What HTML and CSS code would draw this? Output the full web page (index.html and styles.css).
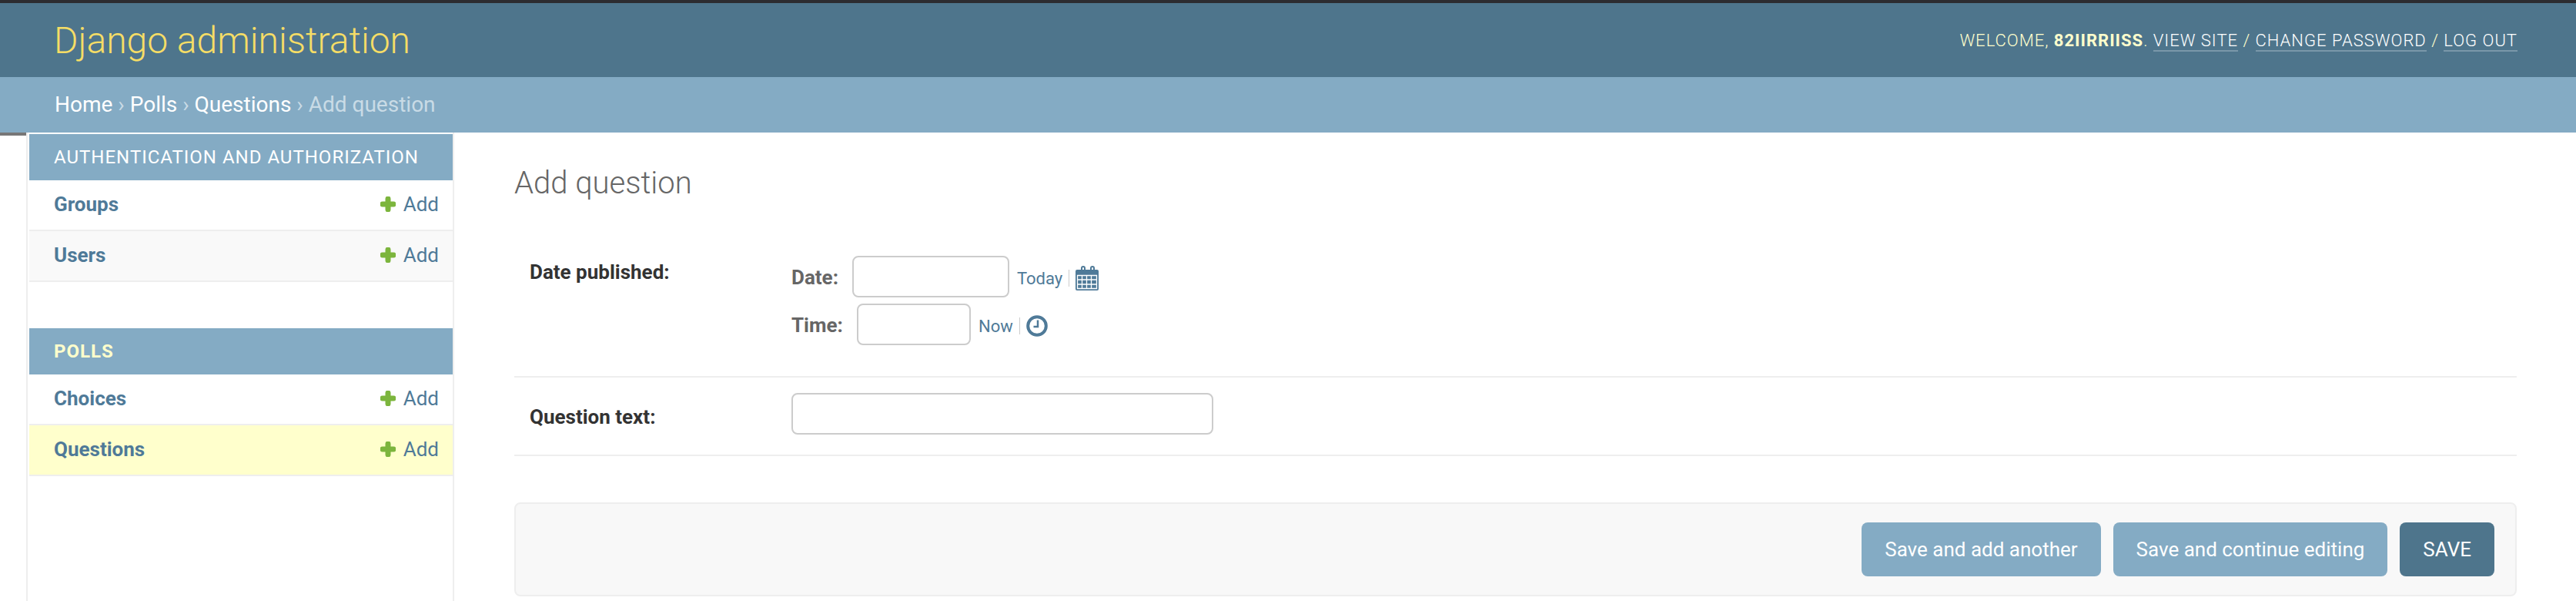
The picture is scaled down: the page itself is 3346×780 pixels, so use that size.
FILE: index.html
```html
<!DOCTYPE html>
<html lang="en">
<head>
    <meta charset="UTF-8">
    <meta name="viewport" content="width=device-width, initial-scale=1.0">
    <title>Add question | Django site admin</title>
    <link rel="stylesheet" href="styles.css">
</head>
<body>
    <header class="header">
        <div class="branding">Django administration</div>
        <div class="user-tools">
            Welcome, <strong>82iirriiss</strong>.
            <a href="#">View site</a> / <a href="#">Change password</a> / <a href="#">Log out</a>
        </div>
    </header>
    <div class="breadcrumbs">
        <a href="#">Home</a> <span class="sep">›</span> <a href="#">Polls</a> <span class="sep">›</span> <a href="#">Questions</a> <span class="sep">›</span> Add question
    </div>

    <div class="main">
        <div class="gutter"></div>
        <nav class="sidebar">
            <div class="app">
                <div class="caption">Authentication and Authorization</div>
                <div class="model">
                    <a class="model-name" href="#">Groups</a>
                    <a class="add-link" href="#">
                        <svg class="plus" viewBox="0 0 20 20"><path d="M10 3v14M3 10h14" /></svg>Add
                    </a>
                </div>
                <div class="model alt">
                    <a class="model-name" href="#">Users</a>
                    <a class="add-link" href="#">
                        <svg class="plus" viewBox="0 0 20 20"><path d="M10 3v14M3 10h14" /></svg>Add
                    </a>
                </div>
            </div>
            <div class="app">
                <div class="caption current">Polls</div>
                <div class="model">
                    <a class="model-name" href="#">Choices</a>
                    <a class="add-link" href="#">
                        <svg class="plus" viewBox="0 0 20 20"><path d="M10 3v14M3 10h14" /></svg>Add
                    </a>
                </div>
                <div class="model selected">
                    <a class="model-name" href="#">Questions</a>
                    <a class="add-link" href="#">
                        <svg class="plus" viewBox="0 0 20 20"><path d="M10 3v14M3 10h14" /></svg>Add
                    </a>
                </div>
            </div>
        </nav>

        <main class="content">
            <h1>Add question</h1>
            <form>
                <div class="form-row">
                    <label class="field-label">Date published:</label>
                    <div class="datetime">
                        <div class="dt-line">
                            <label class="dt-label date-label" for="id_date">Date:</label>
                            <input class="date-input" type="text" id="id_date">
                            <a class="shortcut" href="#">Today</a>
                            <span class="pipe"></span>
                            <a class="dt-icon" href="#">
                                <svg class="calendar" viewBox="0 0 30 32">
                                    <path class="cal-body" d="M2 5h26a2 2 0 0 1 2 2v23a2 2 0 0 1-2 2H2a2 2 0 0 1-2-2V7a2 2 0 0 1 2-2z" />
                                    <path class="cal-ring" d="M8 9V3a2 2 0 0 1 4 0v6M20 9V3a2 2 0 0 1 4 0v6" />
                                    <path class="cal-grid" d="M2.5 12.500h25v17h-25zM2.500 18h25M2.500 24h25M8.500 12.500v17M14.500 12.500v17M20.500 12.500v17" />
                                </svg>
                            </a>
                        </div>
                        <div class="dt-line">
                            <label class="dt-label time-label" for="id_time">Time:</label>
                            <input class="time-input" type="text" id="id_time">
                            <a class="shortcut" href="#">Now</a>
                            <span class="pipe"></span>
                            <a class="dt-icon" href="#">
                                <svg class="clock" viewBox="0 0 28 28">
                                    <circle cx="14" cy="14" r="11.800" />
                                    <path d="M15 6.500V15H9.500" />
                                </svg>
                            </a>
                        </div>
                    </div>
                </div>
                <div class="form-row text-row">
                    <label class="field-label" for="id_question_text">Question text:</label>
                    <input class="text-input" type="text" id="id_question_text">
                </div>
                <div class="submit-row">
                    <button class="btn" type="button">Save and add another</button>
                    <button class="btn" type="button">Save and continue editing</button>
                    <button class="btn btn-default" type="button">SAVE</button>
                </div>
            </form>
        </main>
    </div>
</body>
</html>
```

FILE: styles.css
```css
* {
    box-sizing: border-box;
}

body {
    margin: 0;
    height: 780px;
    overflow: hidden;
    background: #fff;
    color: #333;
    font-family: Roboto, "Liberation Sans", sans-serif;
    font-size: 26px;
    display: flex;
    flex-direction: column;
}

a {
    color: #4f7a98;
    text-decoration: none;
}

.header {
    height: 100px;
    flex: none;
    border-top: 4px solid #2c2c30;
    background: #4e758c;
    padding: 0 76px 0 70px;
    display: flex;
    justify-content: space-between;
    align-items: center;
}

.branding {
    color: #f5dd66;
    font-size: 48px;
    font-weight: 300;
}

.user-tools {
    color: #ffc;
    font-size: 22px;
    font-weight: 300;
    letter-spacing: 1px;
    text-transform: uppercase;
}

.user-tools strong {
    font-weight: 700;
}

.user-tools a {
    color: #fff;
    border-bottom: 2px solid rgba(255, 255, 255, 0.25);
}

.breadcrumbs {
    height: 72px;
    flex: none;
    background: #84abc4;
    color: #c9dbe6;
    padding-left: 71px;
    font-size: 28px;
    line-height: 72px;
}

.breadcrumbs a {
    color: #fff;
}

.main {
    flex: 1;
    display: flex;
    min-height: 0;
}

.gutter {
    flex: 0 0 34px;
    height: 4px;
    background: #777;
}

.sidebar {
    flex: 0 0 556px;
    border-left: 2px solid #eee;
    border-right: 2px solid #eee;
    padding: 2px 0 0 2px;
}

.app {
    margin-bottom: 60px;
}

.caption {
    height: 60px;
    background: #84abc4;
    color: #fff;
    padding-left: 32px;
    font-size: 24px;
    letter-spacing: 1px;
    text-transform: uppercase;
    display: flex;
    align-items: center;
}

.caption.current {
    color: #ffc;
    font-weight: 700;
}

.model {
    height: 66px;
    border-bottom: 2px solid #eee;
    padding: 0 18px 2px 32px;
    display: flex;
    justify-content: space-between;
    align-items: center;
}

.model.alt {
    background: #f9f9f9;
}

.model.selected {
    background: #ffc;
}

.model-name {
    font-weight: 700;
}

.add-link {
    display: flex;
    align-items: center;
    gap: 10px;
}

.plus {
    width: 20px;
    height: 20px;
    fill: none;
    stroke: #7cb53d;
    stroke-width: 7;
    stroke-linecap: round;
}

.content {
    flex: 1;
    padding: 0 77px 0 78px;
    min-width: 0;
}

h1 {
    margin: 0;
    height: 140px;
    padding-top: 42px;
    color: #666;
    font-size: 40px;
    font-weight: 300;
}

.form-row {
    border-bottom: 2px solid #eee;
    padding: 20px 20px 40px;
    display: flex;
}

.field-label {
    flex: 0 0 340px;
    font-weight: 700;
    padding-top: 6px;
}

.datetime {
    display: flex;
    flex-direction: column;
    gap: 8px;
}

.dt-line {
    display: flex;
    align-items: center;
}

.dt-label {
    color: #666;
    font-weight: 700;
    padding-top: 2px;
}

.date-label {
    width: 79px;
}

.time-label {
    width: 85px;
}

input {
    height: 54px;
    border: 2px solid #ccc;
    border-radius: 8px;
    background: #fff;
}

.date-input {
    width: 204px;
}

.time-input {
    width: 148px;
}

.text-input {
    width: 548px;
}

.shortcut {
    margin-left: 10px;
    padding-top: 4px;
    font-size: 22px;
}

.pipe {
    width: 1px;
    height: 22px;
    background: #ccc;
    margin: 3px 8px 0;
}

.dt-icon {
    display: flex;
    padding-top: 3px;
}

.calendar {
    width: 30px;
    height: 32px;
}

.cal-body {
    fill: #4f7a98;
}

.cal-ring {
    fill: none;
    stroke: #4f7a98;
    stroke-width: 2;
}

.cal-grid {
    fill: none;
    stroke: #fff;
    stroke-width: 1.3;
}

.clock {
    width: 28px;
    height: 28px;
    fill: none;
    stroke: #4f7a98;
    stroke-width: 4;
}

.clock path {
    stroke-width: 2.5;
}

.text-row {
    padding-bottom: 26px;
    align-items: center;
}

.text-row .field-label {
    padding-top: 8px;
}

.submit-row {
    margin-top: 60px;
    height: 122px;
    background: #f8f8f8;
    border: 2px solid #eee;
    border-radius: 8px;
    padding: 0 27px;
    display: flex;
    justify-content: flex-end;
    align-items: center;
    gap: 16px;
}

.btn {
    height: 70px;
    border: none;
    border-radius: 8px;
    background: #84abc4;
    color: #fff;
    font-family: inherit;
    font-size: 26px;
    padding: 0 30px;
}

.btn-default {
    background: #4e758c;
}
```
